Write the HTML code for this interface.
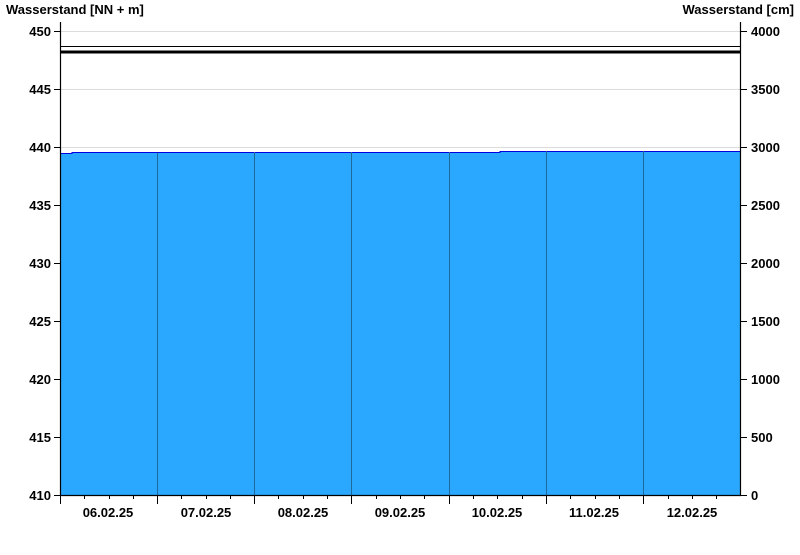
<!DOCTYPE html>
<html><head><style>
body{margin:0;background:#fff;}
svg text{font-family:"Liberation Sans",Arial,sans-serif;font-weight:bold;font-size:13px;fill:#000;}
</style></head><body>
<svg width="800" height="550" xmlns="http://www.w3.org/2000/svg">
<rect width="800" height="550" fill="#fff"/>
<text x="6" y="14">Wasserstand [NN + m]</text>
<text x="794" y="14" text-anchor="end">Wasserstand [cm]</text>
<g stroke="#dcdcdc" stroke-width="1">
<line x1="60" y1="31.5" x2="740" y2="31.5"/>
<line x1="60" y1="89.5" x2="740" y2="89.5"/>
<line x1="60" y1="147.5" x2="740" y2="147.5"/>
</g>
<polygon points="60,153 72,153 72,152 500,152 500,151 740,151 740,495 60,495" fill="#2aa8ff"/>
<polyline points="60,153.5 72,153.5 72,152.5 500,152.5 500,151.5 740,151.5" fill="none" stroke="#0000e0" stroke-width="1"/>
<g stroke="#1d6a9a" stroke-width="1">
<line x1="157.5" y1="153" x2="157.5" y2="495"/>
<line x1="254.5" y1="152" x2="254.5" y2="495"/>
<line x1="351.5" y1="152" x2="351.5" y2="495"/>
<line x1="449.5" y1="152" x2="449.5" y2="495"/>
<line x1="546.5" y1="151" x2="546.5" y2="495"/>
<line x1="643.5" y1="151" x2="643.5" y2="495"/>
</g>
<line x1="60" y1="46.5" x2="740" y2="46.5" stroke="#000" stroke-width="1"/>
<line x1="60" y1="52" x2="740" y2="52" stroke="#000" stroke-width="3"/>
<g stroke="#000" stroke-width="1.2">
<line x1="60.5" y1="22" x2="60.5" y2="495"/>
<line x1="740.5" y1="22" x2="740.5" y2="495"/>
<line x1="60" y1="495.5" x2="741" y2="495.5"/>
</g>
<g stroke="#000" stroke-width="1">
<line x1="54" y1="31.5" x2="60" y2="31.5"/><line x1="54" y1="89.5" x2="60" y2="89.5"/><line x1="54" y1="147.5" x2="60" y2="147.5"/><line x1="54" y1="205.5" x2="60" y2="205.5"/><line x1="54" y1="263.5" x2="60" y2="263.5"/><line x1="54" y1="321.5" x2="60" y2="321.5"/><line x1="54" y1="379.5" x2="60" y2="379.5"/><line x1="54" y1="437.5" x2="60" y2="437.5"/><line x1="54" y1="495.5" x2="60" y2="495.5"/>
<line x1="740" y1="31.5" x2="747" y2="31.5"/><line x1="740" y1="89.5" x2="747" y2="89.5"/><line x1="740" y1="147.5" x2="747" y2="147.5"/><line x1="740" y1="205.5" x2="747" y2="205.5"/><line x1="740" y1="263.5" x2="747" y2="263.5"/><line x1="740" y1="321.5" x2="747" y2="321.5"/><line x1="740" y1="379.5" x2="747" y2="379.5"/><line x1="740" y1="437.5" x2="747" y2="437.5"/><line x1="740" y1="495.5" x2="747" y2="495.5"/>
</g>
<path stroke="#000" stroke-width="1" fill="none" d="
M60.5 495V504 M84.5 495V499 M109.5 495V499 M133.5 495V499
M157.5 495V504 M181.5 495V499 M206.5 495V499 M230.5 495V499
M254.5 495V504 M278.5 495V499 M303.5 495V499 M327.5 495V499
M351.5 495V504 M376.5 495V499 M400.5 495V499 M424.5 495V499
M449.5 495V504 M473.5 495V499 M497.5 495V499 M522.5 495V499
M546.5 495V504 M570.5 495V499 M595.5 495V499 M619.5 495V499
M643.5 495V504 M668.5 495V499 M692.5 495V499 M716.5 495V499"/>
<g text-anchor="end">
<text x="51" y="36">450</text><text x="51" y="94">445</text><text x="51" y="152">440</text><text x="51" y="210">435</text><text x="51" y="268">430</text><text x="51" y="326">425</text><text x="51" y="384">420</text><text x="51" y="442">415</text><text x="51" y="500">410</text>
</g>
<g>
<text x="751" y="36">4000</text><text x="751" y="94">3500</text><text x="751" y="152">3000</text><text x="751" y="210">2500</text><text x="751" y="268">2000</text><text x="751" y="326">1500</text><text x="751" y="384">1000</text><text x="751" y="442">500</text><text x="751" y="500">0</text>
</g>
<g text-anchor="middle">
<text x="108" y="517">06.02.25</text><text x="206" y="517">07.02.25</text><text x="303" y="517">08.02.25</text><text x="400" y="517">09.02.25</text><text x="497" y="517">10.02.25</text><text x="594" y="517">11.02.25</text><text x="692" y="517">12.02.25</text>
</g>
</svg>
</body></html>
